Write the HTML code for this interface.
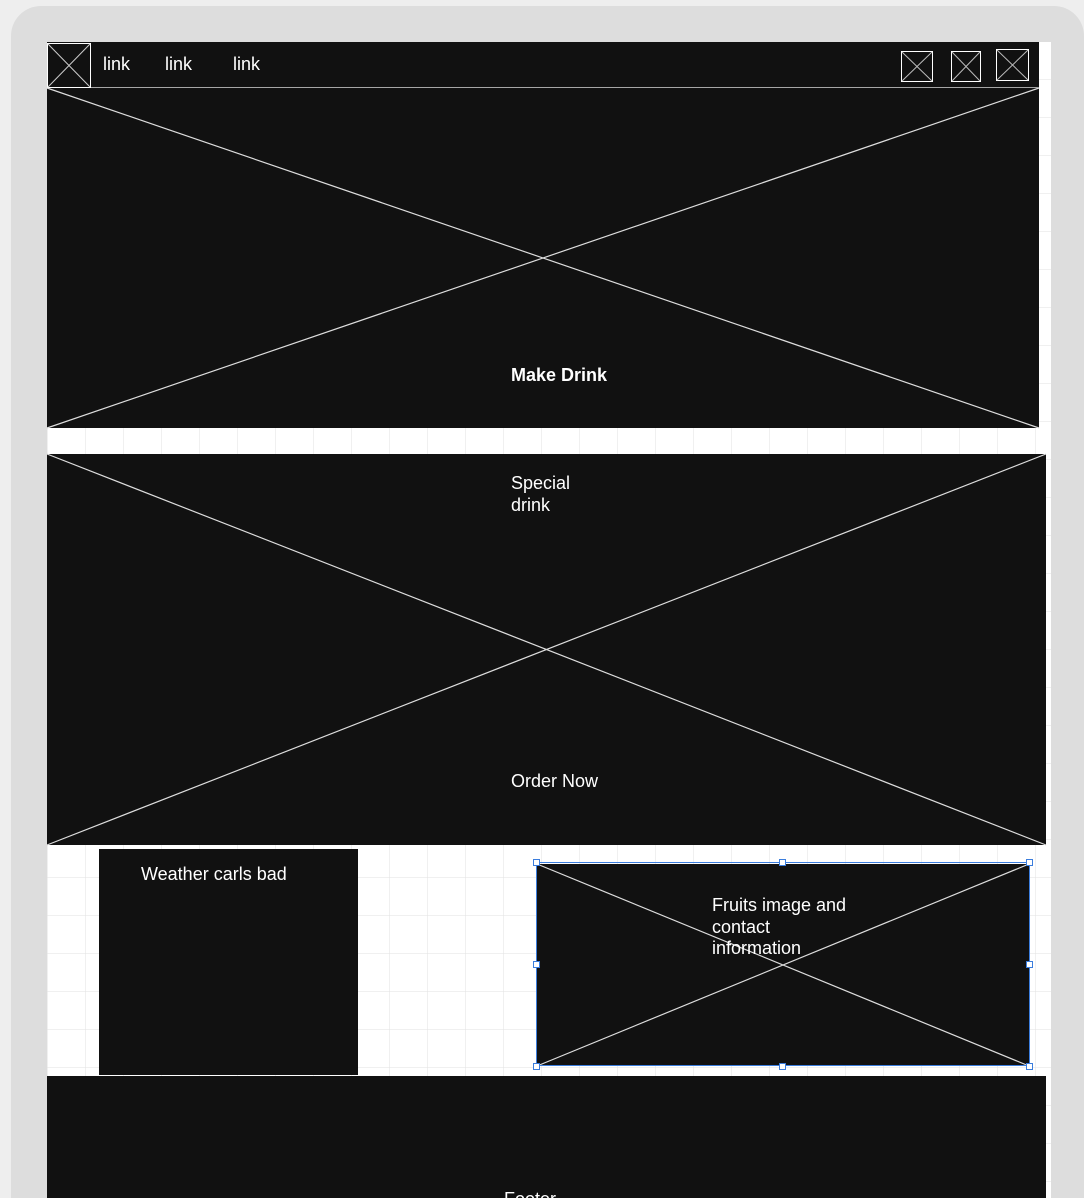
<!DOCTYPE html>
<html><head><meta charset="utf-8"><style>
*{margin:0;padding:0;box-sizing:border-box}
html,body{width:1084px;height:1198px;overflow:hidden;background:#eeeeee;font-family:"Liberation Sans",Arial,sans-serif;position:relative}
.panel{position:absolute;left:11px;top:6px;width:1073px;height:1192px;background:#dddddd;border-radius:30px 30px 0 0}
.canvas{position:absolute;left:47px;top:42px;width:1004px;height:1156px;background:#fff}
.t{position:absolute;color:#fff;font-size:18px;line-height:22px;white-space:nowrap}
</style></head><body>
<div class="panel"></div>
<div class="canvas"></div>
<svg width="1084" height="1198" style="position:absolute;left:0;top:0">
<defs><pattern id="g" x="10" y="4" width="38" height="38" patternUnits="userSpaceOnUse"><path d="M38 0V38M0 38H38" stroke="#e2e2e2" stroke-width="1" fill="none"/></pattern></defs>
<rect x="47" y="42" width="1004" height="1156" fill="url(#g)"/>
<rect x="47" y="42" width="992" height="46" fill="#111"/>
<line x1="47" y1="88" x2="1039" y2="88" stroke="#fff" stroke-width="1.2"/>
<rect x="47.5" y="43.5" width="43" height="44" fill="none" stroke="#fff"/>
<path d="M48 44L90 87M90 44L48 87" stroke="#ccc"/>
<g stroke="#fff" fill="none">
<rect x="901.5" y="51.5" width="31" height="30"/><path d="M902 52L932 81M932 52L902 81" stroke="#bbb"/>
<rect x="951.5" y="51.5" width="29" height="30"/><path d="M952 52L980 81M980 52L952 81" stroke="#bbb"/>
<rect x="996.5" y="49.5" width="32" height="31"/><path d="M997 50L1028 80M1028 50L997 80" stroke="#bbb"/>
</g>
<rect x="47" y="88" width="992" height="340" fill="#111"/>
<path d="M47 88L1039 428M1039 88L47 428" stroke="#ddd" stroke-width="1.2"/>
<rect x="47" y="454" width="999" height="391" fill="#111"/>
<path d="M47 454L1046 845M1046 454L47 845" stroke="#ddd" stroke-width="1.2"/>
<rect x="99" y="849" width="259" height="226" fill="#111"/>
<rect x="537" y="864" width="492" height="202" fill="#111"/>
<path d="M537 864L1029 1066M1029 864L537 1066" stroke="#ddd" stroke-width="1.2"/>
<rect x="536.5" y="862.5" width="493" height="203" fill="none" stroke="#3b7ddd" stroke-width="1"/>
<g fill="#fff" stroke="#3b7ddd">
<rect x="533.5" y="859.5" width="6" height="6"/><rect x="779.5" y="859.5" width="6" height="6"/><rect x="1026.5" y="859.5" width="6" height="6"/>
<rect x="533.5" y="961.5" width="6" height="6"/><rect x="1026.5" y="961.5" width="6" height="6"/>
<rect x="533.5" y="1063.5" width="6" height="6"/><rect x="779.5" y="1063.5" width="6" height="6"/><rect x="1026.5" y="1063.5" width="6" height="6"/>
</g>
<rect x="47" y="1076" width="999" height="122" fill="#111"/>
</svg>
<div class="t" style="left:103px;top:53px">link</div>
<div class="t" style="left:165px;top:53px">link</div>
<div class="t" style="left:233px;top:53px">link</div>
<div class="t" style="left:511px;top:364px;font-weight:bold">Make Drink</div>
<div class="t" style="left:511px;top:472px">Special<br>drink</div>
<div class="t" style="left:511px;top:770px">Order Now</div>
<div class="t" style="left:141px;top:863px">Weather carls bad</div>
<div class="t" style="left:712px;top:895px;line-height:21.5px">Fruits image and<br>contact<br>information</div>
<div class="t" style="left:504px;top:1188px">Footer</div>
</body></html>
